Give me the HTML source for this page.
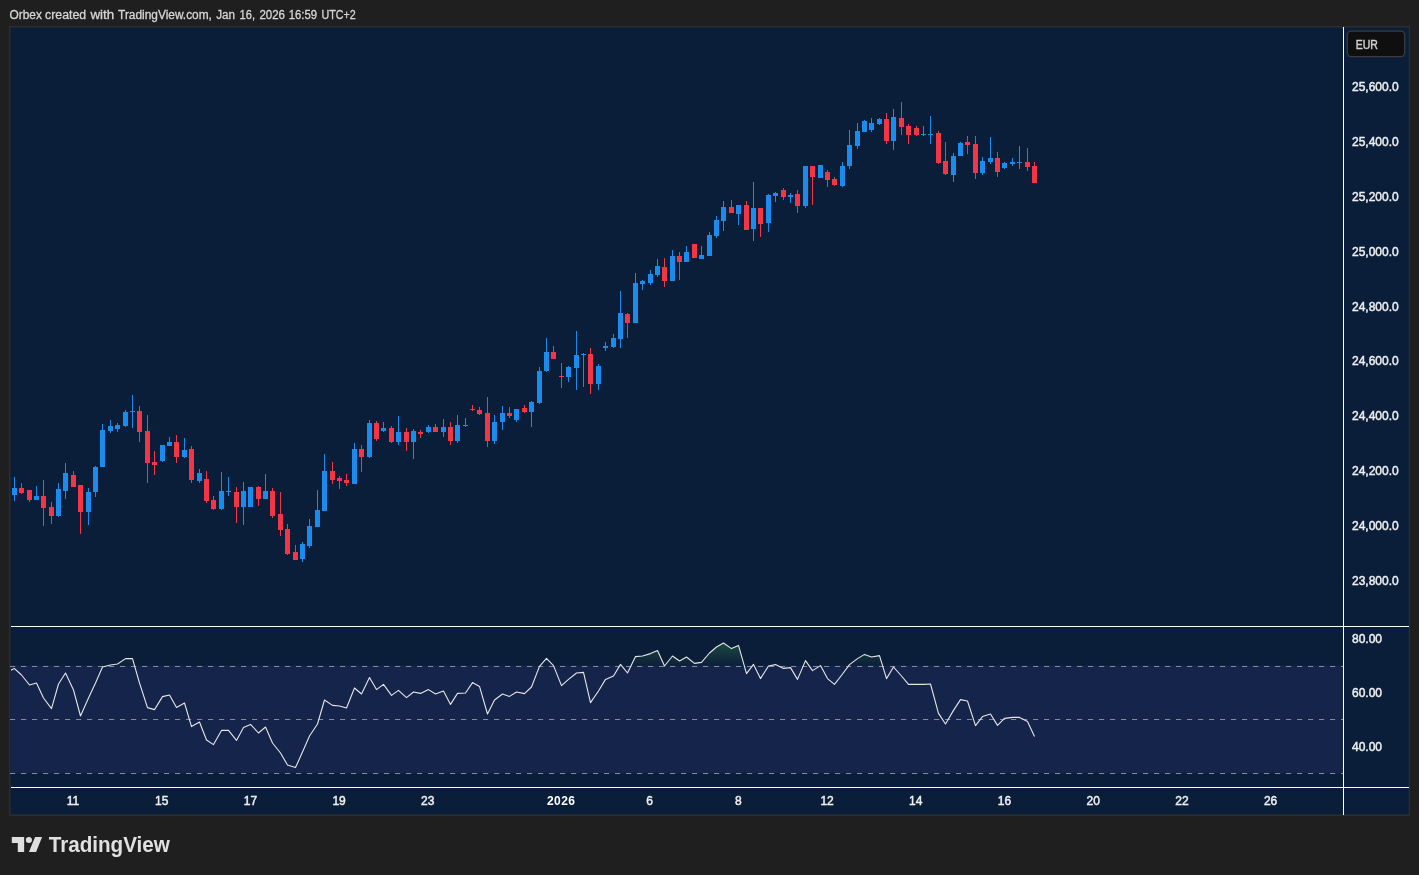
<!DOCTYPE html>
<html lang="en"><head><meta charset="utf-8"><title>Orbex chart - TradingView</title>
<style>html,body{margin:0;padding:0;background:#1f1f1f;}body{width:1419px;height:875px;overflow:hidden;position:relative;font-family:"Liberation Sans",sans-serif;}svg{position:absolute;left:0;top:0;display:block;will-change:transform}text{font-family:"Liberation Sans",sans-serif;}</style></head><body>
<svg width="1419" height="875" viewBox="0 0 1419 875">
<defs><linearGradient id="ob" gradientUnits="userSpaceOnUse" x1="0" y1="586" x2="0" y2="666.5"><stop offset="0" stop-color="#4caf50" stop-opacity="1"/><stop offset="1" stop-color="#4caf50" stop-opacity="0"/></linearGradient><clipPath id="c70"><rect x="11" y="627" width="1332" height="39.5"/></clipPath></defs>
<g font-size="12" fill="#d6d6d6" stroke="#d6d6d6" stroke-width="0.3">
<text x="9.6" y="19" textLength="32.3" lengthAdjust="spacingAndGlyphs">Orbex</text>
<text x="45.1" y="19" textLength="41.0" lengthAdjust="spacingAndGlyphs">created</text>
<text x="90.4" y="19" textLength="23.8" lengthAdjust="spacingAndGlyphs">with</text>
<text x="118.1" y="19" textLength="93.8" lengthAdjust="spacingAndGlyphs">TradingView.com,</text>
<text x="216.2" y="19" textLength="18.8" lengthAdjust="spacingAndGlyphs">Jan</text>
<text x="239.6" y="19" textLength="15.5" lengthAdjust="spacingAndGlyphs">16,</text>
<text x="259.4" y="19" textLength="25.6" lengthAdjust="spacingAndGlyphs">2026</text>
<text x="288.7" y="19" textLength="28.3" lengthAdjust="spacingAndGlyphs">16:59</text>
<text x="321.5" y="19" textLength="34.3" lengthAdjust="spacingAndGlyphs">UTC+2</text>
</g>
<rect x="9" y="26" width="1401" height="790" fill="#2d2d2d"/>
<rect x="10.5" y="27.5" width="1398.3" height="786.9" fill="#0a1e3a"/>
<rect x="10.5" y="665.5" width="1332.5" height="107.8" fill="#15244a"/>
<polygon clip-path="url(#c70)" fill="url(#ob)" points="11.0,672.0 14.5,668.6 21.5,675.0 29.5,685.0 36.5,683.0 43.5,698.0 51.5,708.6 58.5,684.0 65.5,673.0 73.5,690.0 80.5,716.0 88.5,698.0 95.5,683.0 102.5,667.0 110.5,665.0 117.5,664.0 125.5,658.6 132.5,658.6 139.5,683.0 147.5,707.6 154.5,709.6 162.5,696.6 169.5,695.0 176.5,707.4 184.5,703.0 191.5,726.6 199.5,722.0 206.5,740.0 213.5,744.6 221.5,730.4 228.5,730.4 236.5,740.4 243.5,727.6 250.5,724.4 258.5,733.0 265.5,727.0 272.5,743.0 280.5,753.0 287.5,765.0 295.5,767.6 302.5,752.0 309.5,736.0 317.5,724.0 324.5,700.0 332.5,705.4 339.5,706.0 346.5,708.0 354.5,688.0 361.5,694.0 369.5,677.4 376.5,689.6 383.5,684.4 391.5,695.4 398.5,690.4 406.5,697.6 413.5,692.0 420.5,693.4 428.5,689.6 435.5,694.0 443.5,691.0 450.5,704.4 457.5,693.4 465.5,693.0 472.5,682.6 479.5,686.4 487.5,714.0 494.5,700.0 502.5,694.0 509.5,696.4 516.5,692.0 524.5,693.6 531.5,687.0 539.5,666.4 546.5,658.4 553.5,665.6 561.5,685.6 568.5,679.4 576.5,673.0 583.5,672.4 590.5,702.6 598.5,691.0 605.5,679.4 613.5,676.0 620.5,664.4 627.5,673.0 635.5,656.6 642.5,656.0 650.5,653.6 657.5,650.6 664.5,666.0 672.5,656.0 679.5,661.0 686.5,657.0 694.5,663.4 701.5,662.4 709.5,653.0 716.5,647.0 723.5,643.0 731.5,648.6 738.5,645.4 746.5,673.6 753.5,664.4 760.5,678.6 768.5,666.0 775.5,664.6 783.5,668.4 790.5,667.6 797.5,679.4 805.5,660.6 812.5,670.6 820.5,665.6 827.5,678.6 834.5,684.4 842.5,674.0 849.5,664.6 857.5,658.6 864.5,654.4 871.5,657.0 879.5,655.6 886.5,678.6 893.5,667.0 901.5,676.0 908.5,684.4 916.5,684.4 923.5,684.4 930.5,684.0 938.5,713.4 945.5,724.0 953.5,710.4 960.5,699.6 967.5,701.0 975.5,725.6 982.5,716.6 990.5,714.0 997.5,725.4 1004.5,718.4 1012.5,717.4 1019.5,717.4 1027.5,721.4 1034.5,736.6 1034.5,666.5 11.0,666.5"/>
<line x1="10" x2="1343" y1="666.5" y2="666.5" stroke="#868a96" stroke-width="1" stroke-dasharray="5.2 5.8"/>
<line x1="10" x2="1343" y1="719.5" y2="719.5" stroke="#868a96" stroke-width="1" stroke-dasharray="5.2 5.8"/>
<line x1="10" x2="1343" y1="773.5" y2="773.5" stroke="#868a96" stroke-width="1" stroke-dasharray="5.2 5.8"/>
<clipPath id="cp"><rect x="11" y="627" width="1332" height="160"/></clipPath>
<polyline clip-path="url(#cp)" fill="none" stroke="#e6e6e6" stroke-width="1.1" stroke-linejoin="round" points="6.5,672.0 14.5,668.6 21.5,675.0 29.5,685.0 36.5,683.0 43.5,698.0 51.5,708.6 58.5,684.0 65.5,673.0 73.5,690.0 80.5,716.0 88.5,698.0 95.5,683.0 102.5,667.0 110.5,665.0 117.5,664.0 125.5,658.6 132.5,658.6 139.5,683.0 147.5,707.6 154.5,709.6 162.5,696.6 169.5,695.0 176.5,707.4 184.5,703.0 191.5,726.6 199.5,722.0 206.5,740.0 213.5,744.6 221.5,730.4 228.5,730.4 236.5,740.4 243.5,727.6 250.5,724.4 258.5,733.0 265.5,727.0 272.5,743.0 280.5,753.0 287.5,765.0 295.5,767.6 302.5,752.0 309.5,736.0 317.5,724.0 324.5,700.0 332.5,705.4 339.5,706.0 346.5,708.0 354.5,688.0 361.5,694.0 369.5,677.4 376.5,689.6 383.5,684.4 391.5,695.4 398.5,690.4 406.5,697.6 413.5,692.0 420.5,693.4 428.5,689.6 435.5,694.0 443.5,691.0 450.5,704.4 457.5,693.4 465.5,693.0 472.5,682.6 479.5,686.4 487.5,714.0 494.5,700.0 502.5,694.0 509.5,696.4 516.5,692.0 524.5,693.6 531.5,687.0 539.5,666.4 546.5,658.4 553.5,665.6 561.5,685.6 568.5,679.4 576.5,673.0 583.5,672.4 590.5,702.6 598.5,691.0 605.5,679.4 613.5,676.0 620.5,664.4 627.5,673.0 635.5,656.6 642.5,656.0 650.5,653.6 657.5,650.6 664.5,666.0 672.5,656.0 679.5,661.0 686.5,657.0 694.5,663.4 701.5,662.4 709.5,653.0 716.5,647.0 723.5,643.0 731.5,648.6 738.5,645.4 746.5,673.6 753.5,664.4 760.5,678.6 768.5,666.0 775.5,664.6 783.5,668.4 790.5,667.6 797.5,679.4 805.5,660.6 812.5,670.6 820.5,665.6 827.5,678.6 834.5,684.4 842.5,674.0 849.5,664.6 857.5,658.6 864.5,654.4 871.5,657.0 879.5,655.6 886.5,678.6 893.5,667.0 901.5,676.0 908.5,684.4 916.5,684.4 923.5,684.4 930.5,684.0 938.5,713.4 945.5,724.0 953.5,710.4 960.5,699.6 967.5,701.0 975.5,725.6 982.5,716.6 990.5,714.0 997.5,725.4 1004.5,718.4 1012.5,717.4 1019.5,717.4 1027.5,721.4 1034.5,736.6"/>
<g shape-rendering="crispEdges">
<rect x="14" y="477" width="1" height="24" fill="#1b8cec"/><rect x="12" y="488" width="5" height="7" fill="#1b8cec"/>
<rect x="21" y="483" width="1" height="11" fill="#f23645"/><rect x="19" y="488" width="5" height="5" fill="#f23645"/>
<rect x="29" y="490" width="1" height="12" fill="#f23645"/><rect x="27" y="490" width="5" height="10" fill="#f23645"/>
<rect x="36" y="486" width="1" height="14" fill="#1b8cec"/><rect x="34" y="496" width="5" height="4" fill="#1b8cec"/>
<rect x="43" y="480" width="1" height="46" fill="#f23645"/><rect x="41" y="496" width="5" height="12" fill="#f23645"/>
<rect x="51" y="502" width="1" height="22" fill="#f23645"/><rect x="49" y="507" width="5" height="9" fill="#f23645"/>
<rect x="58" y="483" width="1" height="34" fill="#1b8cec"/><rect x="56" y="489" width="5" height="27" fill="#1b8cec"/>
<rect x="65" y="463" width="1" height="36" fill="#1b8cec"/><rect x="63" y="473" width="5" height="18" fill="#1b8cec"/>
<rect x="73" y="471" width="1" height="16" fill="#f23645"/><rect x="71" y="475" width="5" height="12" fill="#f23645"/>
<rect x="80" y="485" width="1" height="49" fill="#f23645"/><rect x="78" y="485" width="5" height="27" fill="#f23645"/>
<rect x="88" y="488" width="1" height="37" fill="#1b8cec"/><rect x="86" y="492" width="5" height="20" fill="#1b8cec"/>
<rect x="95" y="466" width="1" height="31" fill="#1b8cec"/><rect x="93" y="467" width="5" height="25" fill="#1b8cec"/>
<rect x="102" y="424" width="1" height="43" fill="#1b8cec"/><rect x="100" y="430" width="5" height="37" fill="#1b8cec"/>
<rect x="110" y="420" width="1" height="13" fill="#1b8cec"/><rect x="108" y="426" width="5" height="5" fill="#1b8cec"/>
<rect x="117" y="423" width="1" height="9" fill="#1b8cec"/><rect x="115" y="425" width="5" height="4" fill="#1b8cec"/>
<rect x="125" y="410" width="1" height="17" fill="#1b8cec"/><rect x="123" y="412" width="5" height="14" fill="#1b8cec"/>
<rect x="132" y="395" width="1" height="33" fill="#1b8cec"/><rect x="130" y="411" width="5" height="1" fill="#1b8cec"/>
<rect x="139" y="406" width="1" height="36" fill="#f23645"/><rect x="137" y="411" width="5" height="21" fill="#f23645"/>
<rect x="147" y="415" width="1" height="68" fill="#f23645"/><rect x="145" y="431" width="5" height="32" fill="#f23645"/>
<rect x="154" y="451" width="1" height="24" fill="#f23645"/><rect x="152" y="462" width="5" height="3" fill="#f23645"/>
<rect x="162" y="445" width="1" height="17" fill="#1b8cec"/><rect x="160" y="445" width="5" height="16" fill="#1b8cec"/>
<rect x="169" y="437" width="1" height="9" fill="#1b8cec"/><rect x="167" y="442" width="5" height="4" fill="#1b8cec"/>
<rect x="176" y="435" width="1" height="28" fill="#f23645"/><rect x="174" y="442" width="5" height="15" fill="#f23645"/>
<rect x="184" y="438" width="1" height="20" fill="#1b8cec"/><rect x="182" y="450" width="5" height="7" fill="#1b8cec"/>
<rect x="191" y="446" width="1" height="37" fill="#f23645"/><rect x="189" y="449" width="5" height="31" fill="#f23645"/>
<rect x="199" y="469" width="1" height="14" fill="#1b8cec"/><rect x="197" y="473" width="5" height="8" fill="#1b8cec"/>
<rect x="206" y="471" width="1" height="32" fill="#f23645"/><rect x="204" y="479" width="5" height="22" fill="#f23645"/>
<rect x="213" y="496" width="1" height="14" fill="#f23645"/><rect x="211" y="500" width="5" height="9" fill="#f23645"/>
<rect x="221" y="472" width="1" height="38" fill="#1b8cec"/><rect x="219" y="491" width="5" height="18" fill="#1b8cec"/>
<rect x="228" y="477" width="1" height="19" fill="#1b8cec"/><rect x="226" y="491" width="5" height="1" fill="#1b8cec"/>
<rect x="236" y="487" width="1" height="36" fill="#f23645"/><rect x="234" y="492" width="5" height="15" fill="#f23645"/>
<rect x="243" y="482" width="1" height="43" fill="#1b8cec"/><rect x="241" y="491" width="5" height="16" fill="#1b8cec"/>
<rect x="250" y="487" width="1" height="20" fill="#1b8cec"/><rect x="248" y="487" width="5" height="20" fill="#1b8cec"/>
<rect x="258" y="486" width="1" height="20" fill="#f23645"/><rect x="256" y="487" width="5" height="12" fill="#f23645"/>
<rect x="265" y="474" width="1" height="25" fill="#1b8cec"/><rect x="263" y="491" width="5" height="8" fill="#1b8cec"/>
<rect x="272" y="488" width="1" height="30" fill="#f23645"/><rect x="270" y="491" width="5" height="25" fill="#f23645"/>
<rect x="280" y="492" width="1" height="44" fill="#f23645"/><rect x="278" y="514" width="5" height="16" fill="#f23645"/>
<rect x="287" y="524" width="1" height="31" fill="#f23645"/><rect x="285" y="529" width="5" height="25" fill="#f23645"/>
<rect x="295" y="545" width="1" height="15" fill="#f23645"/><rect x="293" y="552" width="5" height="8" fill="#f23645"/>
<rect x="302" y="542" width="1" height="20" fill="#1b8cec"/><rect x="300" y="544" width="5" height="15" fill="#1b8cec"/>
<rect x="309" y="519" width="1" height="29" fill="#1b8cec"/><rect x="307" y="526" width="5" height="20" fill="#1b8cec"/>
<rect x="317" y="490" width="1" height="37" fill="#1b8cec"/><rect x="315" y="510" width="5" height="17" fill="#1b8cec"/>
<rect x="324" y="454" width="1" height="57" fill="#1b8cec"/><rect x="322" y="471" width="5" height="40" fill="#1b8cec"/>
<rect x="332" y="462" width="1" height="22" fill="#f23645"/><rect x="330" y="471" width="5" height="9" fill="#f23645"/>
<rect x="339" y="476" width="1" height="13" fill="#f23645"/><rect x="337" y="478" width="5" height="3" fill="#f23645"/>
<rect x="346" y="474" width="1" height="12" fill="#f23645"/><rect x="344" y="480" width="5" height="3" fill="#f23645"/>
<rect x="354" y="443" width="1" height="41" fill="#1b8cec"/><rect x="352" y="449" width="5" height="35" fill="#1b8cec"/>
<rect x="361" y="445" width="1" height="27" fill="#f23645"/><rect x="359" y="449" width="5" height="8" fill="#f23645"/>
<rect x="369" y="420" width="1" height="38" fill="#1b8cec"/><rect x="367" y="423" width="5" height="34" fill="#1b8cec"/>
<rect x="376" y="421" width="1" height="20" fill="#f23645"/><rect x="374" y="423" width="5" height="16" fill="#f23645"/>
<rect x="383" y="422" width="1" height="10" fill="#1b8cec"/><rect x="381" y="428" width="5" height="3" fill="#1b8cec"/>
<rect x="391" y="426" width="1" height="17" fill="#f23645"/><rect x="389" y="428" width="5" height="14" fill="#f23645"/>
<rect x="398" y="416" width="1" height="29" fill="#1b8cec"/><rect x="396" y="432" width="5" height="10" fill="#1b8cec"/>
<rect x="406" y="428" width="1" height="23" fill="#f23645"/><rect x="404" y="432" width="5" height="10" fill="#f23645"/>
<rect x="413" y="429" width="1" height="30" fill="#1b8cec"/><rect x="411" y="431" width="5" height="11" fill="#1b8cec"/>
<rect x="420" y="430" width="1" height="8" fill="#f23645"/><rect x="418" y="432" width="5" height="2" fill="#f23645"/>
<rect x="428" y="425" width="1" height="8" fill="#1b8cec"/><rect x="426" y="427" width="5" height="5" fill="#1b8cec"/>
<rect x="435" y="424" width="1" height="8" fill="#f23645"/><rect x="433" y="427" width="5" height="5" fill="#f23645"/>
<rect x="443" y="419" width="1" height="18" fill="#1b8cec"/><rect x="441" y="427" width="5" height="5" fill="#1b8cec"/>
<rect x="450" y="422" width="1" height="23" fill="#f23645"/><rect x="448" y="427" width="5" height="14" fill="#f23645"/>
<rect x="457" y="415" width="1" height="28" fill="#1b8cec"/><rect x="455" y="425" width="5" height="16" fill="#1b8cec"/>
<rect x="465" y="418" width="1" height="9" fill="#1b8cec"/><rect x="463" y="425" width="5" height="1" fill="#1b8cec"/>
<rect x="472" y="405" width="1" height="6" fill="#f23645"/><rect x="470" y="409" width="5" height="1" fill="#f23645"/>
<rect x="479" y="407" width="1" height="8" fill="#f23645"/><rect x="477" y="410" width="5" height="4" fill="#f23645"/>
<rect x="487" y="397" width="1" height="50" fill="#f23645"/><rect x="485" y="413" width="5" height="28" fill="#f23645"/>
<rect x="494" y="415" width="1" height="29" fill="#1b8cec"/><rect x="492" y="422" width="5" height="19" fill="#1b8cec"/>
<rect x="502" y="406" width="1" height="24" fill="#1b8cec"/><rect x="500" y="413" width="5" height="9" fill="#1b8cec"/>
<rect x="509" y="407" width="1" height="11" fill="#f23645"/><rect x="507" y="413" width="5" height="3" fill="#f23645"/>
<rect x="516" y="409" width="1" height="13" fill="#1b8cec"/><rect x="514" y="409" width="5" height="11" fill="#1b8cec"/>
<rect x="524" y="405" width="1" height="8" fill="#f23645"/><rect x="522" y="408" width="5" height="4" fill="#f23645"/>
<rect x="531" y="401" width="1" height="26" fill="#1b8cec"/><rect x="529" y="402" width="5" height="10" fill="#1b8cec"/>
<rect x="539" y="367" width="1" height="37" fill="#1b8cec"/><rect x="537" y="371" width="5" height="32" fill="#1b8cec"/>
<rect x="546" y="338" width="1" height="34" fill="#1b8cec"/><rect x="544" y="352" width="5" height="19" fill="#1b8cec"/>
<rect x="553" y="346" width="1" height="13" fill="#f23645"/><rect x="551" y="352" width="5" height="7" fill="#f23645"/>
<rect x="561" y="363" width="1" height="25" fill="#f23645"/><rect x="559" y="376" width="5" height="1" fill="#f23645"/>
<rect x="568" y="366" width="1" height="16" fill="#1b8cec"/><rect x="566" y="367" width="5" height="10" fill="#1b8cec"/>
<rect x="576" y="331" width="1" height="59" fill="#1b8cec"/><rect x="574" y="355" width="5" height="13" fill="#1b8cec"/>
<rect x="583" y="353" width="1" height="34" fill="#1b8cec"/><rect x="581" y="354" width="5" height="1" fill="#1b8cec"/>
<rect x="590" y="348" width="1" height="46" fill="#f23645"/><rect x="588" y="354" width="5" height="30" fill="#f23645"/>
<rect x="598" y="364" width="1" height="26" fill="#1b8cec"/><rect x="596" y="366" width="5" height="18" fill="#1b8cec"/>
<rect x="605" y="342" width="1" height="9" fill="#1b8cec"/><rect x="603" y="346" width="5" height="2" fill="#1b8cec"/>
<rect x="613" y="334" width="1" height="14" fill="#1b8cec"/><rect x="611" y="338" width="5" height="9" fill="#1b8cec"/>
<rect x="620" y="291" width="1" height="57" fill="#1b8cec"/><rect x="618" y="313" width="5" height="26" fill="#1b8cec"/>
<rect x="627" y="313" width="1" height="25" fill="#f23645"/><rect x="625" y="314" width="5" height="9" fill="#f23645"/>
<rect x="635" y="273" width="1" height="50" fill="#1b8cec"/><rect x="633" y="283" width="5" height="40" fill="#1b8cec"/>
<rect x="642" y="280" width="1" height="10" fill="#1b8cec"/><rect x="640" y="281" width="5" height="3" fill="#1b8cec"/>
<rect x="650" y="270" width="1" height="15" fill="#1b8cec"/><rect x="648" y="274" width="5" height="9" fill="#1b8cec"/>
<rect x="657" y="259" width="1" height="18" fill="#1b8cec"/><rect x="655" y="266" width="5" height="9" fill="#1b8cec"/>
<rect x="664" y="258" width="1" height="29" fill="#f23645"/><rect x="662" y="267" width="5" height="14" fill="#f23645"/>
<rect x="672" y="250" width="1" height="31" fill="#1b8cec"/><rect x="670" y="256" width="5" height="25" fill="#1b8cec"/>
<rect x="679" y="252" width="1" height="28" fill="#f23645"/><rect x="677" y="256" width="5" height="6" fill="#f23645"/>
<rect x="686" y="246" width="1" height="16" fill="#1b8cec"/><rect x="684" y="252" width="5" height="10" fill="#1b8cec"/>
<rect x="694" y="244" width="1" height="14" fill="#f23645"/><rect x="692" y="244" width="5" height="14" fill="#f23645"/>
<rect x="701" y="246" width="1" height="13" fill="#1b8cec"/><rect x="699" y="255" width="5" height="4" fill="#1b8cec"/>
<rect x="709" y="232" width="1" height="24" fill="#1b8cec"/><rect x="707" y="235" width="5" height="21" fill="#1b8cec"/>
<rect x="716" y="216" width="1" height="22" fill="#1b8cec"/><rect x="714" y="220" width="5" height="16" fill="#1b8cec"/>
<rect x="723" y="201" width="1" height="30" fill="#1b8cec"/><rect x="721" y="207" width="5" height="14" fill="#1b8cec"/>
<rect x="731" y="200" width="1" height="13" fill="#f23645"/><rect x="729" y="207" width="5" height="6" fill="#f23645"/>
<rect x="738" y="205" width="1" height="20" fill="#1b8cec"/><rect x="736" y="205" width="5" height="9" fill="#1b8cec"/>
<rect x="746" y="201" width="1" height="29" fill="#f23645"/><rect x="744" y="205" width="5" height="25" fill="#f23645"/>
<rect x="753" y="182" width="1" height="59" fill="#1b8cec"/><rect x="751" y="208" width="5" height="21" fill="#1b8cec"/>
<rect x="760" y="208" width="1" height="29" fill="#f23645"/><rect x="758" y="208" width="5" height="16" fill="#f23645"/>
<rect x="768" y="194" width="1" height="38" fill="#1b8cec"/><rect x="766" y="195" width="5" height="28" fill="#1b8cec"/>
<rect x="775" y="192" width="1" height="10" fill="#1b8cec"/><rect x="773" y="193" width="5" height="3" fill="#1b8cec"/>
<rect x="783" y="188" width="1" height="12" fill="#f23645"/><rect x="781" y="190" width="5" height="7" fill="#f23645"/>
<rect x="790" y="193" width="1" height="10" fill="#1b8cec"/><rect x="788" y="195" width="5" height="2" fill="#1b8cec"/>
<rect x="797" y="190" width="1" height="23" fill="#f23645"/><rect x="795" y="194" width="5" height="12" fill="#f23645"/>
<rect x="805" y="166" width="1" height="42" fill="#1b8cec"/><rect x="803" y="166" width="5" height="40" fill="#1b8cec"/>
<rect x="812" y="166" width="1" height="39" fill="#f23645"/><rect x="810" y="166" width="5" height="11" fill="#f23645"/>
<rect x="820" y="165" width="1" height="13" fill="#1b8cec"/><rect x="818" y="165" width="5" height="13" fill="#1b8cec"/>
<rect x="827" y="170" width="1" height="17" fill="#f23645"/><rect x="825" y="172" width="5" height="8" fill="#f23645"/>
<rect x="834" y="177" width="1" height="9" fill="#f23645"/><rect x="832" y="179" width="5" height="6" fill="#f23645"/>
<rect x="842" y="162" width="1" height="25" fill="#1b8cec"/><rect x="840" y="166" width="5" height="20" fill="#1b8cec"/>
<rect x="849" y="130" width="1" height="39" fill="#1b8cec"/><rect x="847" y="145" width="5" height="21" fill="#1b8cec"/>
<rect x="857" y="123" width="1" height="26" fill="#1b8cec"/><rect x="855" y="131" width="5" height="15" fill="#1b8cec"/>
<rect x="864" y="120" width="1" height="12" fill="#1b8cec"/><rect x="862" y="121" width="5" height="11" fill="#1b8cec"/>
<rect x="871" y="118" width="1" height="14" fill="#1b8cec"/><rect x="869" y="123" width="5" height="7" fill="#1b8cec"/>
<rect x="879" y="118" width="1" height="7" fill="#1b8cec"/><rect x="877" y="119" width="5" height="5" fill="#1b8cec"/>
<rect x="886" y="113" width="1" height="31" fill="#f23645"/><rect x="884" y="119" width="5" height="22" fill="#f23645"/>
<rect x="893" y="109" width="1" height="41" fill="#1b8cec"/><rect x="891" y="117" width="5" height="24" fill="#1b8cec"/>
<rect x="901" y="102" width="1" height="33" fill="#f23645"/><rect x="899" y="118" width="5" height="9" fill="#f23645"/>
<rect x="908" y="124" width="1" height="20" fill="#f23645"/><rect x="906" y="126" width="5" height="9" fill="#f23645"/>
<rect x="916" y="126" width="1" height="10" fill="#f23645"/><rect x="914" y="128" width="5" height="7" fill="#f23645"/>
<rect x="923" y="126" width="1" height="10" fill="#1b8cec"/><rect x="921" y="134" width="5" height="1" fill="#1b8cec"/>
<rect x="930" y="116" width="1" height="28" fill="#1b8cec"/><rect x="928" y="134" width="5" height="1" fill="#1b8cec"/>
<rect x="938" y="131" width="1" height="33" fill="#f23645"/><rect x="936" y="133" width="5" height="30" fill="#f23645"/>
<rect x="945" y="142" width="1" height="33" fill="#f23645"/><rect x="943" y="161" width="5" height="13" fill="#f23645"/>
<rect x="953" y="153" width="1" height="29" fill="#1b8cec"/><rect x="951" y="156" width="5" height="19" fill="#1b8cec"/>
<rect x="960" y="142" width="1" height="14" fill="#1b8cec"/><rect x="958" y="143" width="5" height="13" fill="#1b8cec"/>
<rect x="967" y="136" width="1" height="18" fill="#f23645"/><rect x="965" y="142" width="5" height="3" fill="#f23645"/>
<rect x="975" y="136" width="1" height="43" fill="#f23645"/><rect x="973" y="144" width="5" height="29" fill="#f23645"/>
<rect x="982" y="157" width="1" height="18" fill="#1b8cec"/><rect x="980" y="161" width="5" height="12" fill="#1b8cec"/>
<rect x="990" y="137" width="1" height="27" fill="#1b8cec"/><rect x="988" y="158" width="5" height="4" fill="#1b8cec"/>
<rect x="997" y="152" width="1" height="25" fill="#f23645"/><rect x="995" y="158" width="5" height="14" fill="#f23645"/>
<rect x="1004" y="162" width="1" height="7" fill="#1b8cec"/><rect x="1002" y="163" width="5" height="5" fill="#1b8cec"/>
<rect x="1012" y="158" width="1" height="8" fill="#1b8cec"/><rect x="1010" y="162" width="5" height="2" fill="#1b8cec"/>
<rect x="1019" y="146" width="1" height="23" fill="#1b8cec"/><rect x="1017" y="162" width="5" height="1" fill="#1b8cec"/>
<rect x="1027" y="148" width="1" height="23" fill="#f23645"/><rect x="1025" y="162" width="5" height="5" fill="#f23645"/>
<rect x="1034" y="162" width="1" height="21" fill="#f23645"/><rect x="1032" y="166" width="5" height="17" fill="#f23645"/>
</g>
<g shape-rendering="crispEdges" fill="#ffffff"><rect x="11" y="626" width="1398" height="1"/><rect x="11" y="787" width="1398" height="1"/><rect x="1343" y="27" width="1" height="788"/></g>
<text x="1352" y="91.0" font-size="12" fill="#f0f0f0" stroke="#f0f0f0" stroke-width="0.45">25,600.0</text>
<text x="1352" y="145.9" font-size="12" fill="#f0f0f0" stroke="#f0f0f0" stroke-width="0.45">25,400.0</text>
<text x="1352" y="200.8" font-size="12" fill="#f0f0f0" stroke="#f0f0f0" stroke-width="0.45">25,200.0</text>
<text x="1352" y="255.7" font-size="12" fill="#f0f0f0" stroke="#f0f0f0" stroke-width="0.45">25,000.0</text>
<text x="1352" y="310.6" font-size="12" fill="#f0f0f0" stroke="#f0f0f0" stroke-width="0.45">24,800.0</text>
<text x="1352" y="365.4" font-size="12" fill="#f0f0f0" stroke="#f0f0f0" stroke-width="0.45">24,600.0</text>
<text x="1352" y="420.3" font-size="12" fill="#f0f0f0" stroke="#f0f0f0" stroke-width="0.45">24,400.0</text>
<text x="1352" y="475.2" font-size="12" fill="#f0f0f0" stroke="#f0f0f0" stroke-width="0.45">24,200.0</text>
<text x="1352" y="530.1" font-size="12" fill="#f0f0f0" stroke="#f0f0f0" stroke-width="0.45">24,000.0</text>
<text x="1352" y="585.0" font-size="12" fill="#f0f0f0" stroke="#f0f0f0" stroke-width="0.45">23,800.0</text>
<text x="1352" y="643.3" font-size="12" fill="#f0f0f0" stroke="#f0f0f0" stroke-width="0.45">80.00</text>
<text x="1352" y="697.0" font-size="12" fill="#f0f0f0" stroke="#f0f0f0" stroke-width="0.45">60.00</text>
<text x="1352" y="751.0" font-size="12" fill="#f0f0f0" stroke="#f0f0f0" stroke-width="0.45">40.00</text>
<text x="73.0" y="805" font-size="12" fill="#f0f0f0" stroke="#f0f0f0" stroke-width="0.45" text-anchor="middle">11</text>
<text x="161.7" y="805" font-size="12" fill="#f0f0f0" stroke="#f0f0f0" stroke-width="0.45" text-anchor="middle">15</text>
<text x="250.4" y="805" font-size="12" fill="#f0f0f0" stroke="#f0f0f0" stroke-width="0.45" text-anchor="middle">17</text>
<text x="339.1" y="805" font-size="12" fill="#f0f0f0" stroke="#f0f0f0" stroke-width="0.45" text-anchor="middle">19</text>
<text x="427.8" y="805" font-size="12" fill="#f0f0f0" stroke="#f0f0f0" stroke-width="0.45" text-anchor="middle">23</text>
<text x="561.2" y="805" font-size="12" font-weight="bold" fill="#ffffff" text-anchor="middle" letter-spacing="0.45">2026</text>
<text x="649.6" y="805" font-size="12" fill="#f0f0f0" stroke="#f0f0f0" stroke-width="0.45" text-anchor="middle">6</text>
<text x="738.3" y="805" font-size="12" fill="#f0f0f0" stroke="#f0f0f0" stroke-width="0.45" text-anchor="middle">8</text>
<text x="827.1" y="805" font-size="12" fill="#f0f0f0" stroke="#f0f0f0" stroke-width="0.45" text-anchor="middle">12</text>
<text x="915.8" y="805" font-size="12" fill="#f0f0f0" stroke="#f0f0f0" stroke-width="0.45" text-anchor="middle">14</text>
<text x="1004.5" y="805" font-size="12" fill="#f0f0f0" stroke="#f0f0f0" stroke-width="0.45" text-anchor="middle">16</text>
<text x="1093.2" y="805" font-size="12" fill="#f0f0f0" stroke="#f0f0f0" stroke-width="0.45" text-anchor="middle">20</text>
<text x="1181.9" y="805" font-size="12" fill="#f0f0f0" stroke="#f0f0f0" stroke-width="0.45" text-anchor="middle">22</text>
<text x="1270.6" y="805" font-size="12" fill="#f0f0f0" stroke="#f0f0f0" stroke-width="0.45" text-anchor="middle">26</text>
<rect x="1347.3" y="31.1" width="57.4" height="25.5" rx="4" ry="4" fill="#0f0f0f" stroke="#3c3c3c" stroke-width="1.3"/>
<text x="1355.7" y="49" font-size="12" fill="#d2d2d2" stroke="#d2d2d2" stroke-width="0.4" textLength="22.2" lengthAdjust="spacingAndGlyphs">EUR</text>
<g fill="#dedede"><path d="M11.8 836.9H24.15V852H17.8V842.9H11.8Z"/><path d="M35.1 836.9H42.1L36.1 852H28.9Z"/><circle cx="28.9" cy="840.05" r="3.05"/></g>
<text x="48.7" y="851.6" font-size="21.4" font-weight="bold" fill="#e0e0e0" textLength="121.2" lengthAdjust="spacingAndGlyphs">TradingView</text>
</svg></body></html>
